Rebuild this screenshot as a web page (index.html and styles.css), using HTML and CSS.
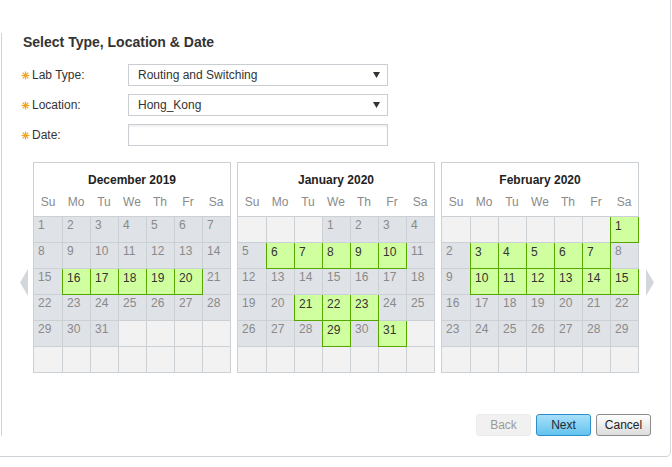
FILE: index.html
```html
<!DOCTYPE html>
<html>
<head>
<meta charset="utf-8">
<link rel="stylesheet" href="styles.css">
</head>
<body>
<div class="frame">
  <div class="panel">
    <h2 class="title">Select Type, Location &amp; Date</h2>
    <div class="form">
      <div class="row">
        <div class="label"><svg class="star" width="9" height="9" viewBox="0 0 9 9"><g stroke="#f2a51f" stroke-width="1.2"><line x1="4.5" y1="0.5" x2="4.5" y2="8.5"/><line x1="0.5" y1="4.5" x2="8.5" y2="4.5"/><line x1="1.7" y1="1.7" x2="7.3" y2="7.3"/><line x1="7.3" y1="1.7" x2="1.7" y2="7.3"/></g></svg><span>Lab Type:</span></div>
        <div class="select"><span>Routing and Switching</span><svg width="7" height="6" viewBox="0 0 7 6"><polygon points="0,0 7,0 3.5,6" fill="#333"/></svg></div>
      </div>
      <div class="row">
        <div class="label"><svg class="star" width="9" height="9" viewBox="0 0 9 9"><g stroke="#f2a51f" stroke-width="1.2"><line x1="4.5" y1="0.5" x2="4.5" y2="8.5"/><line x1="0.5" y1="4.5" x2="8.5" y2="4.5"/><line x1="1.7" y1="1.7" x2="7.3" y2="7.3"/><line x1="7.3" y1="1.7" x2="1.7" y2="7.3"/></g></svg><span>Location:</span></div>
        <div class="select"><span>Hong_Kong</span><svg width="7" height="6" viewBox="0 0 7 6"><polygon points="0,0 7,0 3.5,6" fill="#333"/></svg></div>
      </div>
      <div class="row">
        <div class="label"><svg class="star" width="9" height="9" viewBox="0 0 9 9"><g stroke="#f2a51f" stroke-width="1.2"><line x1="4.5" y1="0.5" x2="4.5" y2="8.5"/><line x1="0.5" y1="4.5" x2="8.5" y2="4.5"/><line x1="1.7" y1="1.7" x2="7.3" y2="7.3"/><line x1="7.3" y1="1.7" x2="1.7" y2="7.3"/></g></svg><span>Date:</span></div>
        <div class="select input"></div>
      </div>
    </div>

    <div class="cals">
      <svg class="nav prev" width="8" height="27" viewBox="0 0 8 27"><polygon points="8,0 8,27 0,13.5" fill="#d3d7db"/></svg>
      <svg class="nav next" width="8" height="27" viewBox="0 0 8 27"><polygon points="0,0 0,27 8,13.5" fill="#d3d7db"/></svg>

      <div class="cal">
        <div class="cal-head">
          <div class="month">December 2019</div>
          <div class="wk"><span>Su</span><span>Mo</span><span>Tu</span><span>We</span><span>Th</span><span>Fr</span><span>Sa</span></div>
        </div>
        <div class="days">
          <div class="d">1</div><div class="d">2</div><div class="d">3</div><div class="d">4</div><div class="d">5</div><div class="d">6</div><div class="d">7</div>
          <div class="d">8</div><div class="d">9</div><div class="d">10</div><div class="d">11</div><div class="d">12</div><div class="d">13</div><div class="d">14</div>
          <div class="d">15</div><div class="d g">16</div><div class="d g">17</div><div class="d g">18</div><div class="d g">19</div><div class="d g">20</div><div class="d">21</div>
          <div class="d">22</div><div class="d">23</div><div class="d">24</div><div class="d">25</div><div class="d">26</div><div class="d">27</div><div class="d">28</div>
          <div class="d">29</div><div class="d">30</div><div class="d">31</div><div class="d e"></div><div class="d e"></div><div class="d e"></div><div class="d e"></div>
          <div class="d e"></div><div class="d e"></div><div class="d e"></div><div class="d e"></div><div class="d e"></div><div class="d e"></div><div class="d e"></div>
        </div>
      </div>

      <div class="cal">
        <div class="cal-head">
          <div class="month">January 2020</div>
          <div class="wk"><span>Su</span><span>Mo</span><span>Tu</span><span>We</span><span>Th</span><span>Fr</span><span>Sa</span></div>
        </div>
        <div class="days">
          <div class="d e"></div><div class="d e"></div><div class="d e"></div><div class="d">1</div><div class="d">2</div><div class="d">3</div><div class="d">4</div>
          <div class="d">5</div><div class="d g">6</div><div class="d g">7</div><div class="d g">8</div><div class="d g">9</div><div class="d g">10</div><div class="d">11</div>
          <div class="d">12</div><div class="d">13</div><div class="d">14</div><div class="d">15</div><div class="d">16</div><div class="d">17</div><div class="d">18</div>
          <div class="d">19</div><div class="d">20</div><div class="d g">21</div><div class="d g">22</div><div class="d g">23</div><div class="d">24</div><div class="d">25</div>
          <div class="d">26</div><div class="d">27</div><div class="d">28</div><div class="d g">29</div><div class="d">30</div><div class="d g">31</div><div class="d e"></div>
          <div class="d e"></div><div class="d e"></div><div class="d e"></div><div class="d e"></div><div class="d e"></div><div class="d e"></div><div class="d e"></div>
        </div>
      </div>

      <div class="cal">
        <div class="cal-head">
          <div class="month">February 2020</div>
          <div class="wk"><span>Su</span><span>Mo</span><span>Tu</span><span>We</span><span>Th</span><span>Fr</span><span>Sa</span></div>
        </div>
        <div class="days">
          <div class="d e"></div><div class="d e"></div><div class="d e"></div><div class="d e"></div><div class="d e"></div><div class="d e"></div><div class="d g">1</div>
          <div class="d">2</div><div class="d g">3</div><div class="d g">4</div><div class="d g">5</div><div class="d g">6</div><div class="d g">7</div><div class="d">8</div>
          <div class="d">9</div><div class="d g">10</div><div class="d g">11</div><div class="d g">12</div><div class="d g">13</div><div class="d g">14</div><div class="d g">15</div>
          <div class="d">16</div><div class="d">17</div><div class="d">18</div><div class="d">19</div><div class="d">20</div><div class="d">21</div><div class="d">22</div>
          <div class="d">23</div><div class="d">24</div><div class="d">25</div><div class="d">26</div><div class="d">27</div><div class="d">28</div><div class="d">29</div>
          <div class="d e"></div><div class="d e"></div><div class="d e"></div><div class="d e"></div><div class="d e"></div><div class="d e"></div><div class="d e"></div>
        </div>
      </div>
    </div>

    <div class="actions">
      <button class="btn back">Back</button>
      <button class="btn primary">Next</button>
      <button class="btn cancel">Cancel</button>
    </div>
  </div>
</div>
</body>
</html>
```

FILE: styles.css
```css
body {
  margin: 0;
  background: #fff;
  color: #333;
  font-family: "Liberation Sans", Arial, sans-serif;
}

.frame {
  width: 669px;
  height: 423px;
  padding-top: 33px;
  padding-left: 1px;
  border-right: 1px solid #d6dadf;
  border-bottom: 1px solid #cdd2d7;
  border-bottom-right-radius: 5px;
}

.panel {
  height: 403px;
  border-left: 1px solid #d2d2d2;
  display: flex;
  flex-direction: column;
}

.title {
  margin: 0;
  padding-left: 21px;
  font-size: 14px;
  font-weight: bold;
  line-height: 18px;
  color: #333;
}

.form {
  margin-top: 13px;
  padding-left: 19px;
  display: flex;
  flex-direction: column;
  gap: 8px;
}

.row {
  display: flex;
  align-items: center;
  height: 22px;
}

.label {
  width: 107px;
  display: flex;
  align-items: center;
  gap: 2px;
  font-size: 12px;
  color: #333;
}

.star {
  display: block;
}

.select {
  width: 260px;
  height: 22px;
  box-sizing: border-box;
  border: 1px solid #cacdd1;
  background: #fff;
  display: flex;
  align-items: center;
  justify-content: space-between;
  padding: 0 7px 0 9px;
  font-size: 12px;
  color: #333;
}

.select svg {
  display: block;
}

.input {
  box-shadow: inset 0 2px 2px rgba(0, 0, 0, 0.06);
}

.cals {
  position: relative;
  margin-top: 16px;
  padding-left: 31px;
  display: flex;
  gap: 6px;
}

.nav {
  position: absolute;
  top: 107px;
  display: block;
}

.nav.prev {
  left: 18px;
}

.nav.next {
  left: 644px;
}

.cal {
  width: 198px;
  box-sizing: border-box;
  border-top: 1px solid #cbd0d5;
  border-left: 1px solid #cbd0d5;
}

.cal-head {
  height: 53px;
  border-right: 1px solid #cbd0d5;
  border-bottom: 1px solid #cbd0d5;
  background: #fff;
}

.month {
  padding-top: 10px;
  line-height: 15px;
  text-align: center;
  font-size: 12px;
  font-weight: bold;
  color: #222;
}

.wk {
  margin-top: 7px;
  display: grid;
  grid-template-columns: 28px repeat(5, 28px) 28px;
  line-height: 15px;
  font-size: 12px;
  color: #8a8a8a;
  text-align: center;
}

.days {
  display: grid;
  grid-template-columns: 29px repeat(6, 28px);
  grid-auto-rows: 26px;
}

.d {
  box-sizing: border-box;
  border-right: 1px solid #cbd0d5;
  border-bottom: 1px solid #cbd0d5;
  background: #dfe2e6;
  color: #8a8a8a;
  font-size: 12px;
  line-height: 15px;
  padding: 1px 0 0 4px;
}

.d.e {
  background: #f2f2f2;
}

.d.g {
  background: #d0ffa0;
  border-color: #56a800;
  color: #333;
  padding-top: 2px;
  box-shadow: -1px 0 0 #56a800;
}

.actions {
  margin-top: auto;
  display: flex;
  justify-content: flex-end;
  gap: 5px;
  padding-right: 19px;
}

.btn {
  width: 55px;
  height: 22px;
  box-sizing: border-box;
  border-radius: 3px;
  font-family: "Liberation Sans", Arial, sans-serif;
  font-size: 12px;
  padding: 0;
  display: flex;
  align-items: center;
  justify-content: center;
}

.back {
  background: #f1f1f1;
  border: 1px solid #ececec;
  color: #9a9a9a;
}

.primary {
  background: linear-gradient(#a9e0f9, #62c3ee);
  border: 1px solid #2c8fcb;
  color: #1e2a33;
}

.cancel {
  background: linear-gradient(#ffffff, #dcdcdc);
  border: 1px solid #8c8c8c;
  color: #222;
}
```
